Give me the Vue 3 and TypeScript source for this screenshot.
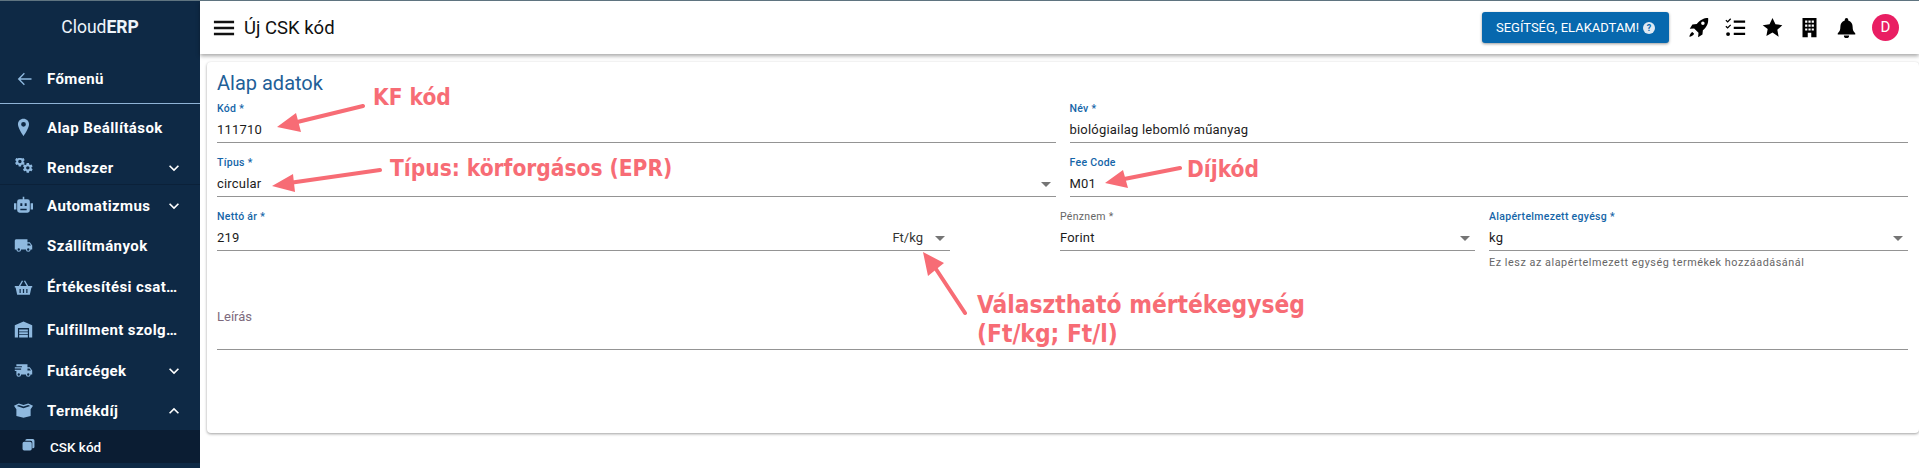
<script setup lang="ts">
interface MenuItem {
  label: string
  icon: string
  h: number
  arrow?: 'down' | 'up'
  line?: boolean
}

const menu: MenuItem[] = [
  { label: 'Alap Beállítások', icon: 'marker', h: 47 },
  { label: 'Rendszer', icon: 'cogs', h: 34, arrow: 'down', line: true },
  { label: 'Automatizmus', icon: 'robot', h: 41, arrow: 'down' },
  { label: 'Szállítmányok', icon: 'truck', h: 39 },
  { label: 'Értékesítési csatornák', icon: 'basket', h: 44 },
  { label: 'Fulfillment szolgáltatók', icon: 'warehouse', h: 41 },
  { label: 'Futárcégek', icon: 'fast', h: 41, arrow: 'down' },
  { label: 'Termékdíj', icon: 'box', h: 39, arrow: 'up' },
]

const cog =
  'M12,15.5A3.5,3.5 0 0,1 8.5,12A3.5,3.5 0 0,1 12,8.5A3.5,3.5 0 0,1 15.5,12A3.5,3.5 0 0,1 12,15.5M19.43,12.97C19.47,12.65 19.5,12.33 19.5,12C19.5,11.67 19.47,11.34 19.43,11L21.54,9.37C21.73,9.22 21.78,8.95 21.66,8.73L19.66,5.27C19.54,5.05 19.27,4.96 19.05,5.05L16.56,6.05C16.04,5.66 15.5,5.32 14.87,5.07L14.5,2.42C14.46,2.18 14.25,2 14,2H10C9.75,2 9.54,2.18 9.5,2.42L9.13,5.07C8.5,5.32 7.96,5.66 7.44,6.05L4.95,5.05C4.73,4.96 4.46,5.05 4.34,5.27L2.34,8.73C2.21,8.95 2.27,9.22 2.46,9.37L4.57,11C4.53,11.34 4.5,11.67 4.5,12C4.5,12.33 4.53,12.65 4.57,12.97L2.46,14.63C2.27,14.78 2.21,15.05 2.34,15.27L4.34,18.73C4.46,18.95 4.73,19.03 4.95,18.95L7.44,17.94C7.96,18.34 8.5,18.68 9.13,18.93L9.5,21.58C9.54,21.82 9.75,22 10,22H14C14.25,22 14.46,21.82 14.5,21.58L14.87,18.93C15.5,18.67 16.04,18.34 16.56,17.94L19.05,18.95C19.27,19.03 19.54,18.95 19.66,18.73L21.66,15.27C21.78,15.05 21.73,14.78 21.54,14.63L19.43,12.97Z'
</script>

<template>
  <div class="page">
    <aside class="sidebar">
      <div class="logo">Cloud<b>ERP</b></div>
      <div class="back">
        <svg class="back-icon" viewBox="0 0 24 24"><path d="M21 11H7.800l5.200-5.300L11.900 4.600 4.500 12l7.400 7.400 1.100-1.100L7.800 13H21z" /></svg>
        <span>Főmenü</span>
      </div>
      <nav class="menu">
        <div v-for="item in menu" :key="item.label" class="item" :class="{ line: item.line }" :style="{ height: item.h + 'px' }">
          <svg class="icon" viewBox="0 0 24 24">
            <path v-if="item.icon === 'marker'" fill-rule="evenodd" d="M12 1C8 1 5 4 5 8c0 5 7 15 7 15s7-10 7-15c0-4-3-7-7-7zm0 10a3 3 0 1 1 0-6 3 3 0 0 1 0 6z" />
            <template v-else-if="item.icon === 'cogs'">
              <path :d="cog" transform="translate(0 -3) scale(.62)" />
              <path :d="cog" transform="translate(10 5) scale(.62)" />
            </template>
            <path v-else-if="item.icon === 'robot'" fill-rule="evenodd" d="M11 1h2v3h4a3 3 0 0 1 3 3v11a3 3 0 0 1-3 3H7a3 3 0 0 1-3-3V7a3 3 0 0 1 3-3h4zM8 9v3.500h2.500V9zm5.500 0v3.500H16V9zM8 16v2h8v-2zM0 9h3v8H0zm21 0h3v8h-3z" />
            <path v-else-if="item.icon === 'truck'" d="M18,18.5A1.5,1.5 0 0,1 16.5,17A1.5,1.5 0 0,1 18,15.5A1.5,1.500 0 0,1 19.5,17A1.5,1.5 0 0,1 18,18.5M19.5,9.5L21.46,12H17V9.5M6,18.5A1.5,1.5 0 0,1 4.5,17A1.5,1.5 0 0,1 6,15.5A1.5,1.5 0 0,1 7.5,17A1.5,1.5 0 0,1 6,18.5M20,8H17V4H3C1.89,4 1,4.89 1,6V17H3A3,3 0 0,0 6,20A3,3 0 0,0 9,17H15A3,3 0 0,0 18,20A3,3 0 0,0 21,17H23V12L20,8Z" />
            <path v-else-if="item.icon === 'basket'" fill-rule="evenodd" d="M1 10h5l4-7 1.500.8L8 10h8l-3.500-6.200L14 3l4 7h5v2h-1l-2 9H4l-2-9H1zm6 4v5h1.500v-5zm4.200 0v5h1.600v-5zm4.300 0v5H17v-5z" />
            <path v-else-if="item.icon === 'warehouse'" fill-rule="evenodd" d="M12 2l11 4.500V22h-4V10H5v12H1V6.500zM6.500 12h11v2.500h-11zm0 3.500h11V18h-11zm0 3.500h11v3h-11z" />
            <path v-else-if="item.icon === 'fast'" d="M18,18.5A1.5,1.5 0 0,1 16.5,17A1.5,1.5 0 0,1 18,15.5A1.5,1.500 0 0,1 19.5,17A1.5,1.5 0 0,1 18,18.5M19.5,9.5L21.46,12H17V9.5M6,18.5A1.5,1.5 0 0,1 4.5,17A1.5,1.5 0 0,1 6,15.5A1.5,1.5 0 0,1 7.5,17A1.5,1.5 0 0,1 6,18.5M20,8H17V4H3V6.500H10V8H1V9.500H9V11H1V12.500H3V17A3,3 0 0,0 9,17H15A3,3 0 0,0 21,17H23V12L20,8Z" />
            <path v-else-if="item.icon === 'box'" fill-rule="evenodd" d="M0 6l6-3 6 2 6-2 6 3-3 4.500V19l-9 2-9-2v-8.500zm3.500.300L12 9l8.500-2.700L18 5l-6 2-6-2z" />
          </svg>
          <span class="item-label">{{ item.label }}</span>
          <svg v-if="item.arrow" class="chev" :class="{ up: item.arrow === 'up' }" viewBox="0 0 24 24"><path d="M7.400 8.600 12 13.200l4.600-4.600L18 10l-6 6-6-6z" /></svg>
        </div>
        <div class="sub">
          <svg class="sub-icon" viewBox="0 0 24 24"><path d="M9 2h11a3 3 0 0 1 3 3v11a3 3 0 0 1-3 3h-1V8a3 3 0 0 0-3-3H6a3 3 0 0 1 3-3zM4 7h11a3 3 0 0 1 3 3v10a3 3 0 0 1-3 3H4a3 3 0 0 1-3-3V10a3 3 0 0 1 3-3z" /></svg>
          <span>CSK kód</span>
        </div>
      </nav>
    </aside>

    <div class="main">
      <header class="bar">
        <svg class="burger" viewBox="0 0 24 18"><path d="M1 1h22v2.800H1zM1 7.600h22v2.800H1zM1 14.200h22V17H1z" /></svg>
        <h1 class="title">Új CSK kód</h1>
        <div class="spacer"></div>
        <button class="help">
          SEGÍTSÉG, ELAKADTAM!
          <span class="q">?</span>
        </button>
        <div class="actions">
          <svg class="act" viewBox="0 0 24 24"><path fill-rule="evenodd" d="M23 1c.6 5-1 10-6 14l-.5 5-5 3 .5-5-5-5-5 .5 3-5 5-.5C14 3 18 1 23 1zm-6 4a2 2 0 1 0 0 4 2 2 0 0 0 0-4zM5 17c-2 1-3 3-3.500 5.500C4 22 6 21 7 19z" /></svg>
          <svg class="act" viewBox="0 0 24 24"><path d="M10 4h13v2.600H10zM10 11h13v2.600H10zM10 18h13v2.600H10zM1.500 3 3 4.500 6 1.500l1 1-4 4L.5 4zM1.500 10 3 11.500l3-3 1 1-4 4-2.500-2.500z" /><circle cx="3.500" cy="19.500" r="2.200" /></svg>
          <svg class="act" viewBox="0 0 24 24"><path d="M12 1l3.400 7.300 7.800 1-5.700 5.400 1.500 7.900L12 17.800l-7 3.800 1.500-7.900L.8 9.300l7.800-1z" /></svg>
          <svg class="act" viewBox="0 0 24 24"><path fill-rule="evenodd" d="M4 1h16v22h-6v-5h-4v5H4zm3 3v2.500h2.500V4zm3.800 0v2.500h2.500V4zm3.700 0v2.500H17V4zM7 8.500V11h2.500V8.500zm3.800 0V11h2.500V8.500zm3.700 0V11H17V8.500zM7 13v2.500h2.500V13zm3.800 0v2.500h2.500V13zm3.700 0v2.500H17V13z" /></svg>
          <svg class="act" viewBox="0 0 24 24"><path d="M12 1a2 2 0 0 1 2 2v1c3.500 1 5 4 5 7 0 4 1 5.500 3 7.500V20H2v-1.500c2-2 3-3.500 3-7.500 0-3 1.500-6 5-7V3a2 2 0 0 1 2-2zM9 21h6a3 3 0 0 1-6 0z" /></svg>
          <div class="avatar">D</div>
        </div>
      </header>

      <section class="card">
        <h2 class="card-title">Alap adatok</h2>
        <div class="row">
          <div class="field">
            <label class="lbl">Kód *</label>
            <div class="val">111710</div>
          </div>
          <div class="field">
            <label class="lbl">Név *</label>
            <div class="val">biológiailag lebomló műanyag</div>
          </div>
        </div>
        <div class="row">
          <div class="field">
            <label class="lbl">Típus *</label>
            <div class="val">circular<i class="caret"></i></div>
          </div>
          <div class="field">
            <label class="lbl">Fee Code</label>
            <div class="val">M01</div>
          </div>
        </div>
        <div class="row">
          <div class="field price">
            <label class="lbl">Nettó ár *</label>
            <div class="val">219<span class="unit">Ft/kg</span><i class="caret"></i></div>
          </div>
          <div class="field cur">
            <label class="lbl muted">Pénznem *</label>
            <div class="val">Forint<i class="caret"></i></div>
          </div>
          <div class="field">
            <label class="lbl">Alapértelmezett egyésg *</label>
            <div class="val">kg<i class="caret"></i></div>
            <div class="hint">Ez lesz az alapértelmezett egység termékek hozzáadásánál</div>
          </div>
        </div>
        <div class="desc">Leírás</div>
      </section>
    </div>

    <!-- kézi jelölések a képernyőképen -->
    <svg class="notes" viewBox="0 0 1919 468">
      <g class="arrows">
        <path class="shaft" d="M363 106 285 125M380 170 282 184M1180 168 1114 181M965 313 930 260" />
        <path d="M277 127 296 113 301 132zM272 186 293 174 295 192zM1105 183 1123 170 1128 188zM923 252 944 263 928 276z" />
      </g>
      <text x="373" y="105">KF kód</text>
      <text x="390" y="176">Típus: körforgásos (EPR)</text>
      <text x="1187" y="177">Díjkód</text>
      <text class="big" x="977" y="313">Választható mértékegység</text>
      <text class="big" x="977" y="342">(Ft/kg; Ft/l)</text>
    </svg>
  </div>
</template>

<style>
html,
body {
  margin: 0;
  background: #fff;
  overflow: hidden;
}
</style>

<style scoped>
.page {
  position: relative;
  display: flex;
  width: 1919px;
  height: 468px;
  overflow: hidden;
  border-top: 1px solid #5f7480;
  box-sizing: border-box;
  font-family: Roboto, 'Liberation Sans', sans-serif;
  color: #1c1c1c;
}

.sidebar {
  width: 200px;
  flex: none;
  background: #0e2945;
  color: #fff;
}

.logo {
  height: 54px;
  line-height: 52px;
  text-align: center;
  font-size: 17.500px;
  color: #eef4fa;
}
.logo b {
  font-weight: 700;
}

.back {
  display: flex;
  align-items: center;
  height: 48px;
  padding-left: 14px;
  border-bottom: 1px solid #8fb3d6;
  font-size: 15px;
  font-weight: 700;
  letter-spacing: 0.4px;
}
.back span {
  margin-left: 13px;
}
.back-icon {
  width: 20px;
  height: 20px;
  fill: #8fb9df;
}

.item {
  display: flex;
  align-items: center;
  padding-left: 14px;
  font-size: 15px;
  font-weight: 700;
  letter-spacing: 0.4px;
  box-sizing: border-box;
}
.item.line {
  border-bottom: 1px solid #0b2139;
}
.icon {
  width: 19px;
  height: 19px;
  flex: none;
  fill: #8fb9df;
}
.item-label {
  margin-left: 14px;
  width: 136px;
  flex: none;
  white-space: nowrap;
  overflow: hidden;
  text-overflow: ellipsis;
}
.item:has(.chev) .item-label {
  width: 112px;
}
.chev {
  width: 20px;
  height: 20px;
  margin-left: 5px;
  fill: #fff;
}
.chev.up {
  transform: rotate(180deg);
}

.sub {
  display: flex;
  align-items: center;
  height: 33px;
  padding-left: 22px;
  background: #0b1d33;
  font-size: 13.500px;
  font-weight: 500;
}
.sub span {
  margin-left: 15px;
}
.sub-icon {
  width: 13px;
  height: 13px;
  fill: #8fb9df;
  margin-top: -4px;
}

.main {
  flex: 1;
  min-width: 0;
}

.bar {
  display: flex;
  align-items: center;
  height: 53px;
  padding: 0 0 0 13px;
  background: #fff;
  box-shadow: 0 2px 4px rgba(0, 0, 0, 0.35);
  position: relative;
}
.burger {
  width: 22px;
  height: 18px;
  fill: #111;
}
.title {
  margin: 0 0 0 9px;
  font-size: 18.500px;
  font-weight: 400;
  color: #111;
}
.spacer {
  flex: 1;
}
.help {
  display: flex;
  align-items: center;
  gap: 4px;
  height: 31px;
  width: 187px;
  justify-content: center;
  padding: 0;
  border: 0;
  border-radius: 3px;
  background: #0768ae;
  color: #fff;
  font-family: inherit;
  font-size: 13px;
  font-weight: 400;
  box-shadow: 0 1px 3px rgba(0, 0, 0, 0.4);
}
.q {
  width: 12px;
  height: 12px;
  border-radius: 50%;
  background: #dfe9f3;
  color: #0768ae;
  font-size: 9px;
  font-weight: 700;
  line-height: 12px;
  text-align: center;
}
.actions {
  display: flex;
  align-items: center;
  margin-left: 19px;
  margin-right: 20px;
  gap: 16px;
}
.act {
  width: 21px;
  height: 21px;
  fill: #000;
}
.avatar {
  width: 27px;
  height: 27px;
  border-radius: 50%;
  background: #e91e63;
  color: #fff;
  font-size: 15px;
  line-height: 27px;
  text-align: center;
  margin-left: -1px;
}

.card {
  height: 371px;
  margin: 8px 0 0 7px;
  padding: 8px 11px 0 10px;
  box-sizing: border-box;
  background: #fff;
  border-radius: 4px;
  box-shadow: 0 1px 3px rgba(0, 0, 0, 0.38);
}
.card-title {
  margin: 0 0 4px;
  font-size: 20px;
  font-weight: 400;
  line-height: 26px;
  color: #1f6098;
}

.row {
  display: flex;
  gap: 14px;
  height: 54px;
}
.field {
  flex: 1;
  min-width: 0;
  position: relative;
}
.field.price {
  flex: none;
  width: 733px;
  margin-right: 96px;
}
.field.cur {
  flex: none;
  width: 415px;
}
.lbl {
  display: block;
  height: 13px;
  margin-top: 2px;
  font-size: 10.500px;
  font-weight: 500;
  line-height: 13px;
  letter-spacing: 0.3px;
  color: #1565a8;
}
.lbl.muted {
  color: #666;
  font-weight: 400;
}
.val {
  position: relative;
  display: flex;
  align-items: center;
  height: 28px;
  padding-top: 2px;
  box-sizing: border-box;
  border-bottom: 1px solid #949494;
  font-size: 13px;
  letter-spacing: 0.2px;
  color: #1c1c1c;
}
.unit {
  position: absolute;
  right: 27px;
  color: #333;
  font-size: 13px;
  letter-spacing: 0;
}
.caret {
  position: absolute;
  right: 5px;
  top: 13px;
  border-left: 5px solid transparent;
  border-right: 5px solid transparent;
  border-top: 5px solid #757575;
}
.hint {
  margin-top: 5px;
  font-size: 10.800px;
  letter-spacing: 0.55px;
  color: #666;
  white-space: nowrap;
}

.desc {
  margin-top: 46px;
  height: 42px;
  width: 100%;
  border-bottom: 1px solid #949494;
  font-size: 13px;
  line-height: 18px;
  color: #7d6a7d;
  box-sizing: border-box;
}

.notes {
  position: absolute;
  left: 0;
  top: -1px;
  width: 1919px;
  height: 468px;
  pointer-events: none;
}
.notes text {
  fill: #f76c75;
  font-family: 'DejaVu Sans Condensed', 'DejaVu Sans', sans-serif;
  font-stretch: condensed;
  font-weight: 700;
  font-size: 22.500px;
}
.notes text.big {
  font-size: 24.300px;
}
.arrows path {
  fill: #f76c75;
}
.arrows path.shaft {
  fill: none;
  stroke: #f76c75;
  stroke-width: 4;
  stroke-linecap: round;
}
</style>
